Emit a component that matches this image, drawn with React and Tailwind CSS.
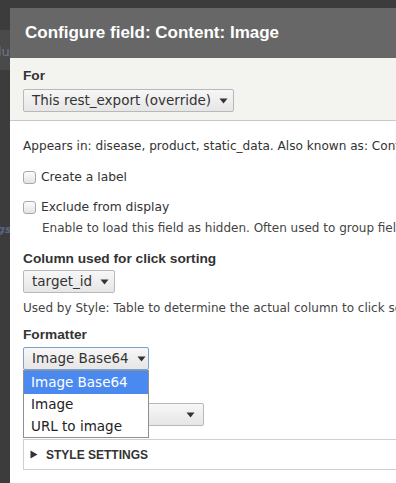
import React from "react";

const font = { fontFamily: '"DejaVu Sans", Verdana, sans-serif' };
const boldFont = { fontFamily: '"Liberation Sans", Arial, sans-serif' };

function Select({ label, className = "", focused = false }) {
  return (
    <div
      className={`flex h-[23px] items-center justify-between rounded-[2px] border bg-gradient-to-b from-[#f7f7f7] to-[#e6e6e6] pl-[8px] pr-[8px] text-[13.5px] text-[#333] ${
        focused ? "border-[#7a9fd3]" : "border-[#b8b8b8]"
      } ${className}`}
    >
      <span className="whitespace-nowrap leading-none">{label}</span>
      <Caret />
    </div>
  );
}

function Caret() {
  return (
    <svg width="9" height="6" viewBox="0 0 9 6" className="ml-[8px] shrink-0">
      <path d="M0.5 0.5 L8.5 0.5 L4.5 5.5 Z" fill="#333" />
    </svg>
  );
}

function Checkbox({ label }) {
  return (
    <div className="flex items-center gap-[5px]">
      <span className="block h-[13px] w-[13px] rounded-[3px] border border-[#a9a9a9] bg-gradient-to-b from-[#fcfcfc] to-[#e4e4e4]" />
      <span className="whitespace-nowrap text-[12.3px] leading-[16px] text-[#333]">{label}</span>
    </div>
  );
}

function Label({ children }) {
  return (
    <div className="text-[13.7px] font-bold leading-[16px] text-[#333]" style={boldFont}>
      {children}
    </div>
  );
}

export default function App() {
  return (
    <div className="relative h-[483px] w-[396px] overflow-hidden bg-[#3c3c3c]" style={font}>
      {/* page behind the overlay */}
      <div className="absolute left-0 top-[30px] h-[40px] w-[10px] bg-[#4a4a4a]" />
      <span className="absolute left-[-2px] top-[42px] text-[13px] text-[#6a7690]">lu</span>
      <span className="absolute left-[-3px] top-[222px] text-[11px] font-bold italic text-[#5a6580]">gs</span>

      <div className="absolute left-[10px] top-[8px] h-[475px] w-[400px] bg-white">
        <div className="flex h-[50px] items-center bg-[#676767] pl-[15px]">
          <h1 className="whitespace-nowrap text-[17px] font-bold text-white" style={boldFont}>
            Configure field: Content: Image
          </h1>
        </div>

        <div className="border-b border-[#c8c8c4] bg-[#f3f3f0] px-[13px] pb-[8px] pt-[10px]">
          <Label>For</Label>
          <Select label="This rest_export (override)" className="mt-[5px] w-[211px]" />
        </div>

        <div className="px-[13px] pt-[17px]">
          <p className="whitespace-nowrap text-[12.1px] leading-[16px] text-[#333]">
            Appears in: disease, product, static_data. Also known as: Content: Image
          </p>

          <div className="mt-[15px]">
            <Checkbox label="Create a label" />
          </div>

          <div className="mt-[14px]">
            <Checkbox label="Exclude from display" />
            <p className="mt-[5px] whitespace-nowrap pl-[19px] text-[12px] leading-[16px] text-[#444]">
              Enable to load this field as hidden. Often used to group fields
            </p>
          </div>

          <div className="mt-[15px]">
            <Label>Column used for click sorting</Label>
            <Select label="target_id" className="mt-[3px] w-[92px]" />
            <p className="mt-[7px] whitespace-nowrap text-[12px] leading-[16px] text-[#444]">
              Used by Style: Table to determine the actual column to click sort the field on
            </p>
          </div>

          <div className="relative mt-[11px]">
            <Label>Formatter</Label>
            <Select label="Image Base64" focused className="mt-[4px] w-[126px]" />

            <Select label="" className="mt-[33px] w-[181px]" />

            {/* open dropdown list */}
            <ul className="absolute left-0 top-[43px] z-10 w-[126px] border border-[#8f8f8f] bg-white text-[13.5px] text-[#222]">
              <li className="flex h-[23px] items-center bg-[#4a8af0] pl-[7px] text-white">Image Base64</li>
              <li className="flex h-[21px] items-center pl-[7px]">Image</li>
              <li className="flex h-[22px] items-center pl-[7px]">URL to image</li>
            </ul>
          </div>

          <div className="mt-[13px] flex h-[31px] items-center border border-[#cfcfcf] pl-[6px]">
            <svg width="8" height="9" viewBox="0 0 8 9" className="mr-[8px]">
              <path d="M0.5 0.5 L7.5 4.5 L0.5 8.5 Z" fill="#333" />
            </svg>
            <span className="text-[12px] font-bold uppercase text-[#333]" style={boldFont}>
              Style settings
            </span>
          </div>
        </div>
      </div>
    </div>
  );
}
